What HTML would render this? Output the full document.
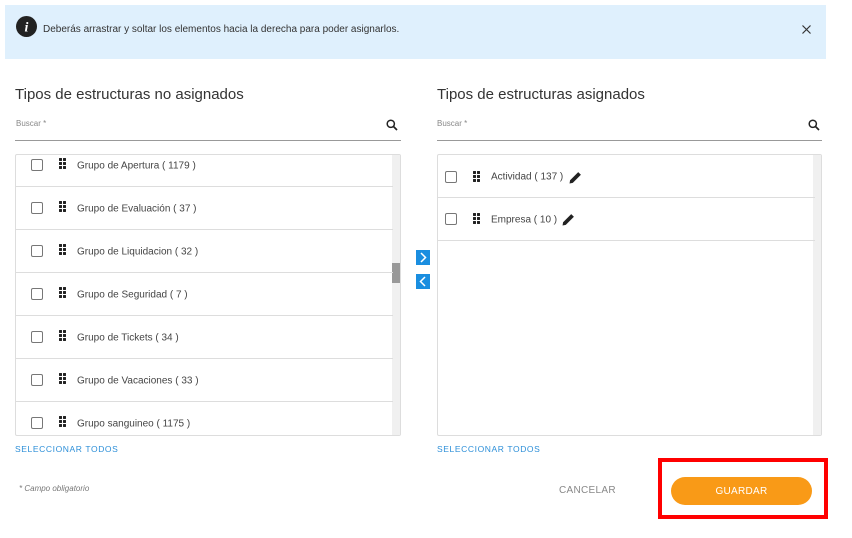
<!DOCTYPE html>
<html><head><meta charset="utf-8"><style>
*{box-sizing:border-box;margin:0;padding:0}
body{width:852px;height:538px;background:#fff;font-family:"Liberation Sans",sans-serif;position:relative;overflow:hidden;color:#333}
.a{position:absolute}
.banner{left:5px;top:5px;width:821px;height:54px;background:#dff0fd}
.h{font-size:15px;color:#333;top:86px}
.bus{font-size:8px;color:#888;top:119px}
.line{height:1px;background:#999;top:140px}
.box{top:154px;height:282px;border:1px solid #ddd;border-radius:2px;overflow:hidden}
.row{position:absolute;left:0;height:43px;border-bottom:1px solid #ddd;font-size:10px;color:#444}
.cb{position:absolute;width:12px;height:12px;border:1px solid #777;border-radius:2px;background:#fff}
.drag{position:absolute;width:7px;height:11px}
.drag i{position:absolute;width:3px;height:3px;background:#222;border-radius:.5px}
.row span{position:absolute;top:50%;transform:translateY(-40%)}
.sel{font-size:8.5px;color:#2d8fd8;letter-spacing:.6px;top:444px}
.arr{left:416px;width:14px;height:15px;background:#1a8ee0}
</style></head><body>
<div class="a banner"></div>
<svg class="a" style="left:16px;top:16px" width="21" height="21" viewBox="0 0 21 21"><circle cx="10.5" cy="10.5" r="10.5" fill="#222"/><text x="10.5" y="15.5" text-anchor="middle" font-family="Liberation Serif" font-style="italic" font-weight="bold" font-size="14" fill="#fff">i</text></svg>
<div class="a" style="left:43px;top:24px;font-size:10px;color:#333">Deberás arrastrar y soltar los elementos hacia la derecha para poder asignarlos.</div>
<svg class="a" style="left:802px;top:25px" width="9" height="9" viewBox="0 0 9 9"><path d="M.5 .5L8.5 8.5M8.5 .5L.5 8.5" stroke="#333" stroke-width="1.2"/></svg>

<div class="a h" style="left:15px">Tipos de estructuras no asignados</div>
<div class="a h" style="left:437px">Tipos de estructuras asignados</div>
<div class="a bus" style="left:16px">Buscar *</div>
<div class="a bus" style="left:437px">Buscar *</div>
<svg class="a" style="left:386px;top:119px" width="12" height="12" viewBox="0 0 12 12"><circle cx="4.8" cy="4.8" r="3.6" fill="none" stroke="#222" stroke-width="1.5"/><path d="M7.5 7.5L11 11" stroke="#222" stroke-width="1.7"/></svg>
<svg class="a" style="left:808px;top:119px" width="12" height="12" viewBox="0 0 12 12"><circle cx="4.8" cy="4.8" r="3.6" fill="none" stroke="#222" stroke-width="1.5"/><path d="M7.5 7.5L11 11" stroke="#222" stroke-width="1.7"/></svg>
<div class="a line" style="left:15px;width:386px"></div>
<div class="a line" style="left:437px;width:385px"></div>

<div class="a box" style="left:15px;width:386px">
 <div class="a" style="right:0;top:0;width:8px;height:282px;background:#f0f0f0"></div>
 <div class="a" style="right:0;top:108px;width:8px;height:20px;background:#999"></div>
 <div id="L"></div>
</div>
<div class="a box" style="left:437px;width:385px">
 <div class="a" style="right:0;top:0;width:8px;height:282px;background:#f0f0f0"></div>
 <div class="row" style="top:0;width:377px"><div class="cb" style="left:7px;top:16px"></div><div class="drag" style="left:35px;top:16px"><i style="left:0;top:0"></i><i style="left:4px;top:0"></i><i style="left:0;top:4px"></i><i style="left:4px;top:4px"></i><i style="left:0;top:8px"></i><i style="left:4px;top:8px"></i></div><span style="left:53px">Actividad ( 137 )</span>
 <svg class="a" style="left:131px;top:16px" width="13" height="13" viewBox="0 0 12 12"><path d="M.5 11.5L1 8.5L8.5 1L11 3.5L3.5 11Z" fill="#222"/></svg></div>
 <div class="row" style="top:43px;width:377px"><div class="cb" style="left:7px;top:15px"></div><div class="drag" style="left:35px;top:15px"><i style="left:0;top:0"></i><i style="left:4px;top:0"></i><i style="left:0;top:4px"></i><i style="left:4px;top:4px"></i><i style="left:0;top:8px"></i><i style="left:4px;top:8px"></i></div><span style="left:53px">Empresa ( 10 )</span>
 <svg class="a" style="left:124px;top:15px" width="13" height="13" viewBox="0 0 12 12"><path d="M.5 11.5L1 8.5L8.5 1L11 3.5L3.5 11Z" fill="#222"/></svg></div>
</div>

<div class="a arr" style="top:250px"><svg width="14" height="15" viewBox="0 0 14 15"><path d="M5 3L9.5 7.5L5 12" stroke="#fff" stroke-width="1.5" fill="none"/></svg></div>
<div class="a arr" style="top:274px"><svg width="14" height="15" viewBox="0 0 14 15"><path d="M9 3L4.5 7.5L9 12" stroke="#fff" stroke-width="1.5" fill="none"/></svg></div>

<div class="a sel" style="left:15px">SELECCIONAR TODOS</div>
<div class="a sel" style="left:437px">SELECCIONAR TODOS</div>
<div class="a" style="left:19px;top:484px;font-size:8px;font-style:italic;color:#777">* Campo obligatorio</div>
<div class="a" style="left:559px;top:485px;font-size:10px;color:#888;letter-spacing:.3px">CANCELAR</div>
<div class="a" style="left:658px;top:458px;width:170px;height:61px;border:4px solid #f00"></div>
<div class="a" style="left:671px;top:477px;width:141px;height:28px;background:#f99a17;border-radius:14px;color:#fff;font-size:10px;text-align:center;line-height:29px;letter-spacing:.3px">GUARDAR</div>

<script>
var items=["Grupo de Apertura ( 1179 )","Grupo de Evaluación ( 37 )","Grupo de Liquidacion ( 32 )","Grupo de Seguridad ( 7 )","Grupo de Tickets ( 34 )","Grupo de Vacaciones ( 33 )","Grupo sanguineo ( 1175 )"];
var h="";
items.forEach(function(t,k){var top=-11+k*43;
h+='<div class="row" style="top:'+top+'px;width:377px"><div class="cb" style="left:15px;top:15px"></div><div class="drag" style="left:43px;top:14px"><i style="left:0;top:0"></i><i style="left:4px;top:0"></i><i style="left:0;top:4px"></i><i style="left:4px;top:4px"></i><i style="left:0;top:8px"></i><i style="left:4px;top:8px"></i></div><span style="left:61px">'+t+'</span></div>';});
document.getElementById("L").innerHTML=h;
</script>
</body></html>
